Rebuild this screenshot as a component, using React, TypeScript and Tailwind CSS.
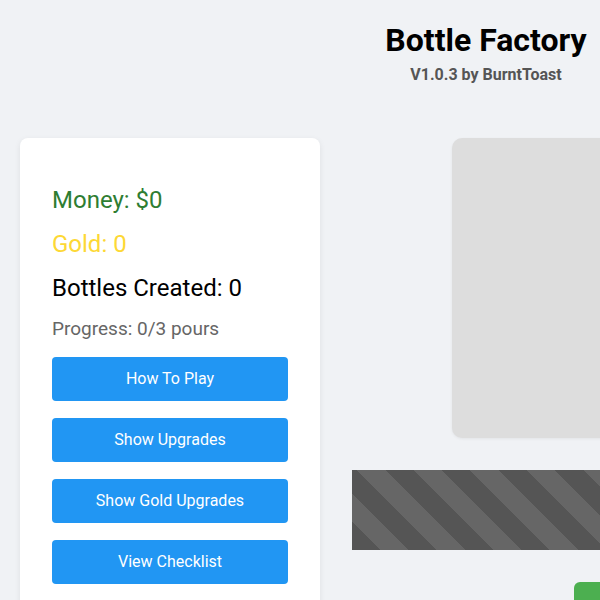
import React from "react";

const buttons = ["How To Play", "Show Upgrades", "Show Gold Upgrades", "View Checklist"];

export default function App() {
  return (
    <div className="h-[600px] w-[600px] overflow-hidden bg-[#f0f2f5] font-['Roboto',sans-serif]">
      <div className="w-[972px]">
        {/* Header */}
        <header className="flex flex-col items-center pt-[20px]">
          <h1 className="text-[32px] font-bold leading-[40px] text-black">Bottle Factory</h1>
          <p className="mt-[5px] text-[16px] font-bold leading-[20px] text-[#555]">
            V1.0.3 by BurntToast
          </p>
        </header>

        <main className="mt-[53px] flex items-start gap-[32px] pl-[20px]">
          {/* Stats card */}
          <section className="flex w-[300px] shrink-0 flex-col rounded-[8px] bg-white px-[32px] pb-[32px] pt-[48px] shadow-[0_2px_6px_rgba(0,0,0,0.08)]">
            <div className="flex flex-col gap-[16px]">
              <p className="text-[24px] leading-[28px] text-[#2e7d32]">Money: $0</p>
              <p className="text-[24px] leading-[28px] text-[#fdd835]">Gold: 0</p>
              <p className="text-[24px] leading-[28px] text-black">Bottles Created: 0</p>
              <p className="text-[19px] leading-[22px] text-[#666]">Progress: 0/3 pours</p>
            </div>
            <div className="mt-[17px] flex flex-col gap-[17px]">
              {buttons.map((b) => (
                <button
                  key={b}
                  className="h-[44px] w-full rounded-[4px] bg-[#2196f3] text-[16px] text-white"
                >
                  {b}
                </button>
              ))}
            </div>
          </section>

          {/* Factory area */}
          <section className="flex w-[600px] flex-col">
            <div className="ml-[100px] h-[300px] w-[400px] rounded-[10px] bg-[#dddddd] shadow-[0_1px_3px_rgba(0,0,0,0.06)]" />
            <div className="mt-[32px] h-[80px] w-full bg-[repeating-linear-gradient(45deg,#555555_0px,#555555_20px,#666666_20px,#666666_40px)]" />
            <div className="ml-[222px] mt-[32px] flex">
              <button aria-label="Pour" className="h-[44px] w-[160px] rounded-[6px] bg-[#4caf50]" />
            </div>
          </section>
        </main>
      </div>
    </div>
  );
}
